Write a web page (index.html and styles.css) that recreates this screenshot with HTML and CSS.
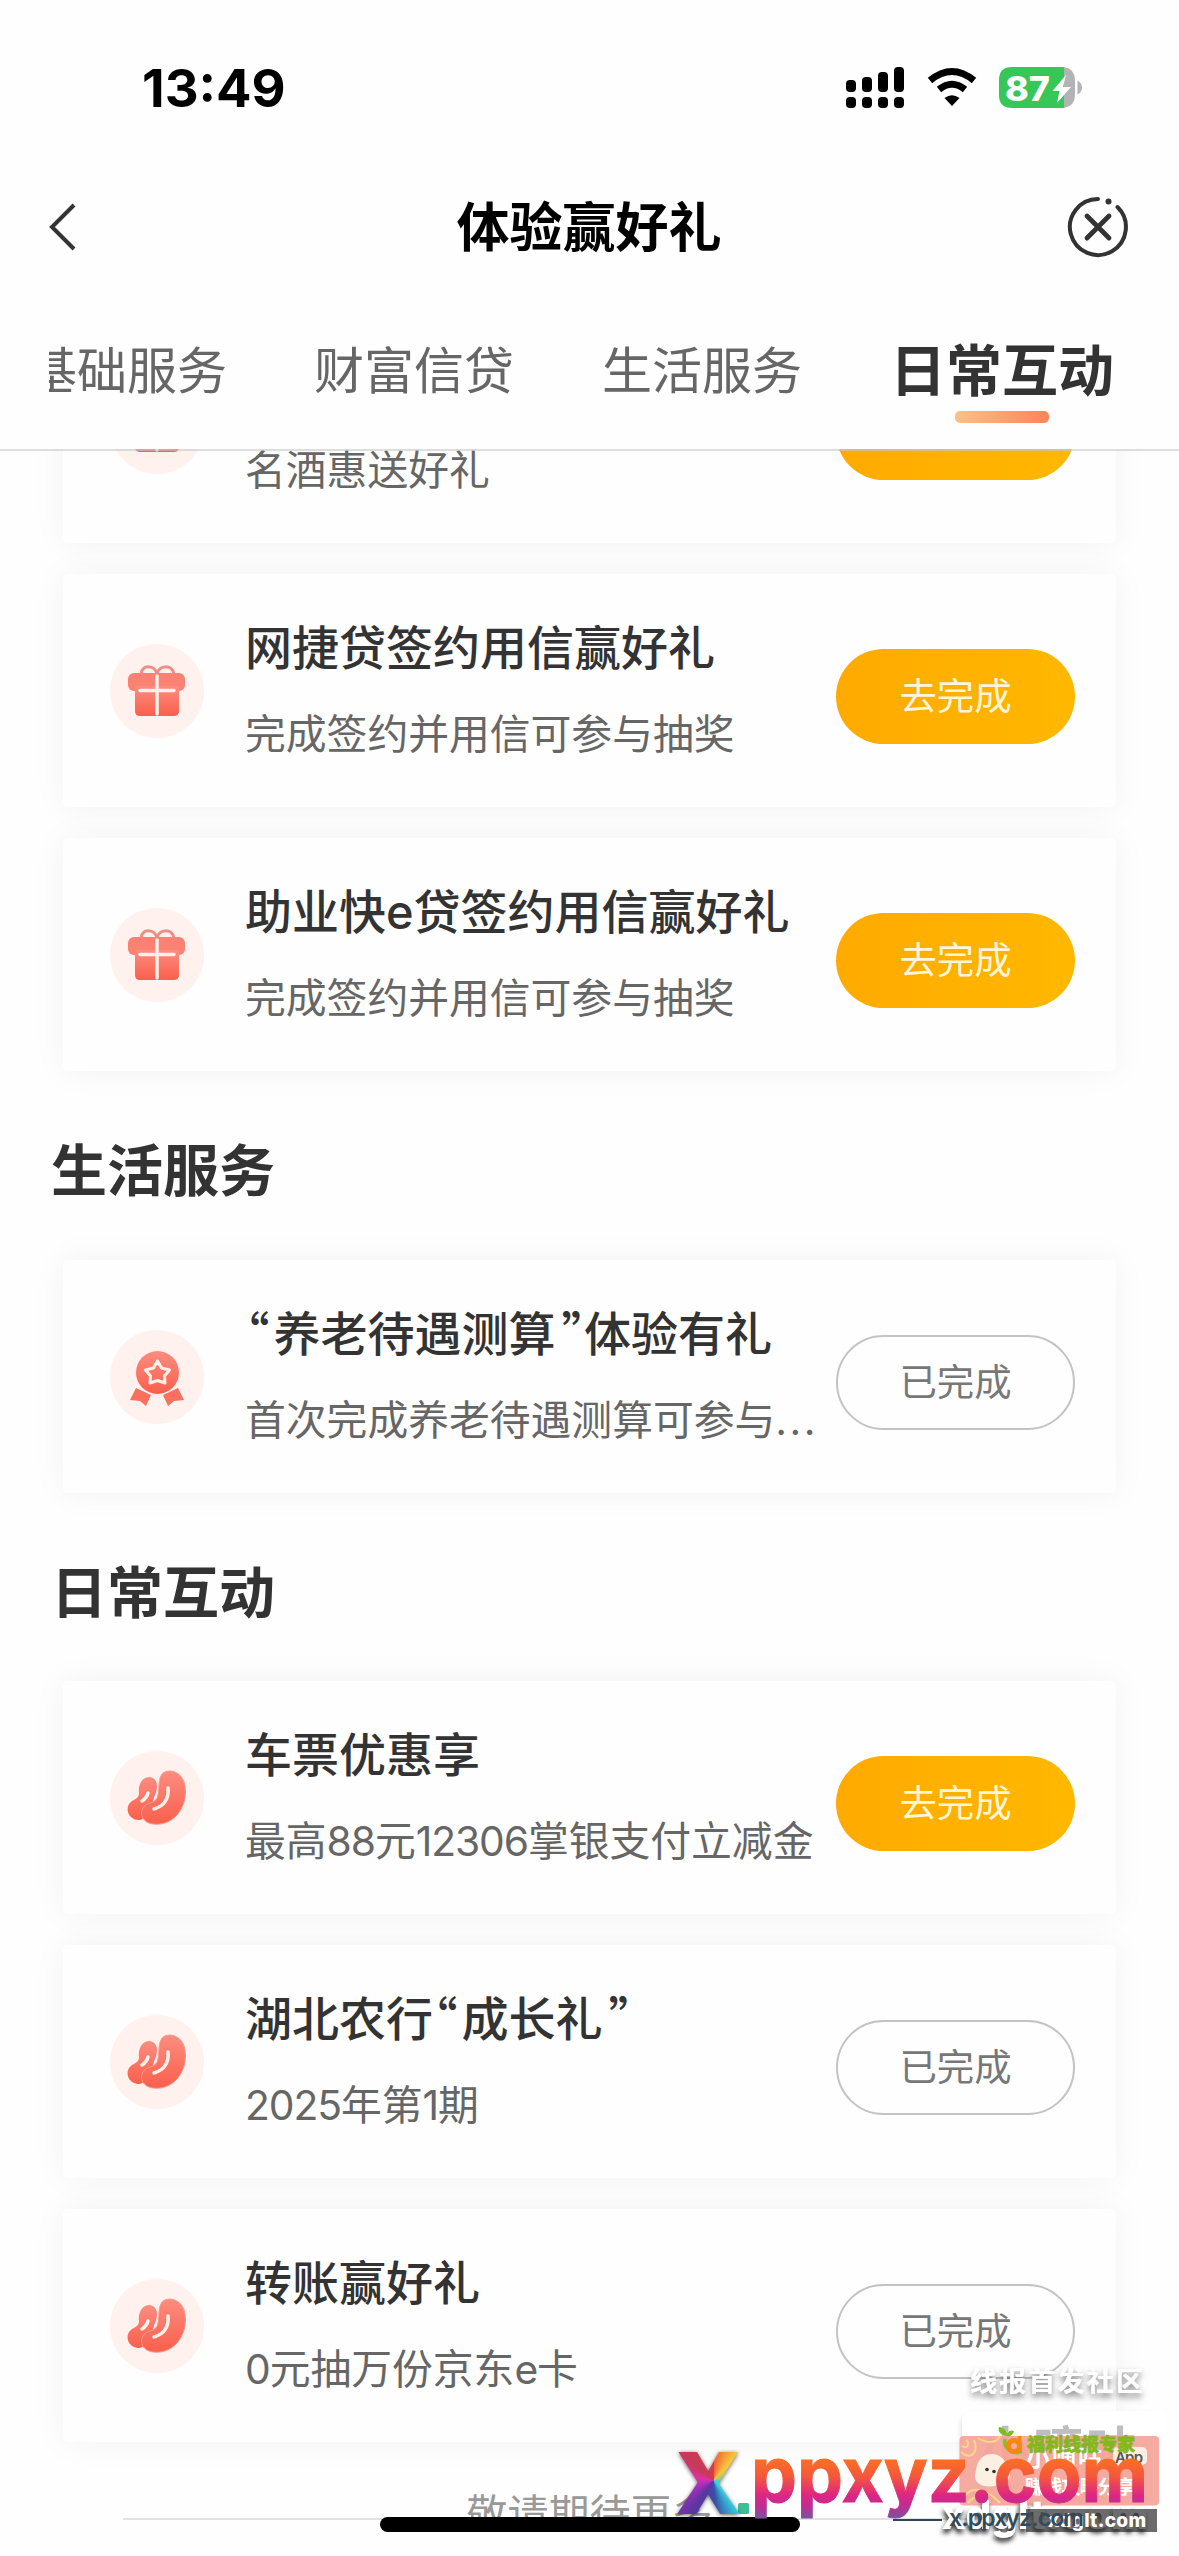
FILE: index.html
```html
<!DOCTYPE html>
<html lang="zh-CN">
<head>
<meta charset="utf-8">
<title>体验赢好礼</title>
<link rel="stylesheet" href="styles.css">
</head>
<body>
<svg class="defs" width="0" height="0" aria-hidden="true">
  <defs>
    <linearGradient id="coral" x1="0" y1="0" x2="0" y2="1">
      <stop offset="0" stop-color="#fb8d80"/><stop offset="1" stop-color="#fb5f4c"/>
    </linearGradient>
    <symbol id="gift" viewBox="0 0 94 94">
      <circle cx="47" cy="47" r="47" fill="#fff1ee"/>
      <path d="M31 30C32 20 45 21 47 30C49 21 62 20 64 30" fill="none" stroke="#f28c80" stroke-width="3"/>
      <rect x="18" y="29" width="57" height="18" rx="6" fill="#fb8173"/>
      <path d="M25 42H69V67Q69 72 64 72H30Q25 72 25 67Z" fill="url(#coral)"/>
      <path d="M47 32V70M30 46.500H64" stroke="#fff1ea" stroke-width="3.500" stroke-linecap="round"/>
    </symbol>
    <symbol id="medal" viewBox="0 0 94 94">
      <circle cx="47" cy="47" r="47" fill="#fff1ee"/>
      <circle cx="47.500" cy="42.500" r="21.500" fill="url(#coral)"/>
      <path d="M47.500 31L51.500 38L59.500 40L54.500 46L55 53L47.500 50.500L40 53L40.500 46L35.500 40L43.500 38Z" fill="none" stroke="#fff1ea" stroke-width="3" stroke-linejoin="round"/>
      <path d="M26 58L41 65L36 76L30 71L20 70ZM68 58L53 65L58 76L64 71L74 70Z" fill="#f9705f"/>
    </symbol>
    <symbol id="bean" viewBox="0 0 94 94">
      <circle cx="47" cy="47" r="47" fill="#fff1ee"/>
      <path d="M40 26C47 27 49 35 45 44C41 55 40 68 29 69C20 69 15 60 19 53C22 48 28 49 29 43C28 33 32 26 40 26Z" fill="url(#coral)"/>
      <path d="M60 20C73 21 77 34 75 47C72 63 60 75 43 73C33 72 29 63 33 57C37 50 46 54 48 44C50 33 47 20 60 20Z" fill="url(#coral)" stroke="#f79a8c" stroke-width="1"/>
      <path d="M58 37C59 48 54 55 44 58M38 42C37 46 35 48 32 50" fill="none" stroke="#fff1ea" stroke-width="3.500" stroke-linecap="round"/>
    </symbol>
  </defs>
</svg>

<header class="header">
  <div class="status">
    <span class="clock">13:49</span>
    <div class="status-icons">
      <svg width="58" height="42" viewBox="0 0 58 42">
        <g><rect y="13" width="10" height="12" rx="4"/><rect x="16" y="10" width="10" height="15" rx="4"/><rect x="32" y="5" width="10" height="20" rx="4"/><rect x="48" width="10" height="25" rx="4"/>
        <rect y="30" width="10" height="11" rx="4"/><rect x="16" y="30" width="10" height="11" rx="4"/><rect x="32" y="30" width="10" height="11" rx="4"/><rect x="48" y="30" width="10" height="11" rx="4"/></g>
      </svg>
      <svg class="wifi" width="50" height="42" viewBox="0 0 50 42">
        <path d="M3 13.500Q25 -4.500 47 13.500M12 22.500Q25 12 38 22.500" fill="none" stroke="#000" stroke-width="7"/>
        <path d="M17.500 31Q25 25.500 32.500 31L25 39Z"/>
      </svg>
      <svg width="83" height="42" viewBox="0 0 83 42">
        <path d="M13 0H65V41H13Q0 41 0 28V13Q0 0 13 0Z" fill="#37c759"/>
        <path d="M65 0Q76 2 76 13V28Q76 39 65 41Z" fill="#b3b3b5"/>
        <path d="M78.500 13.500Q83 16 83 20.500T78.500 27.500Z" fill="#b3b3b5"/>
        <text class="battery-text" x="6" y="33.500" textLength="45" lengthAdjust="spacingAndGlyphs">87</text>
        <path d="M67 8L53.500 24H60.500L58 36L72 20H64Z" fill="#fff"/>
      </svg>
    </div>
  </div>
  <div class="navbar">
    <svg width="30" height="50" viewBox="0 0 30 50"><path d="M27 3L5 25L27 47" fill="none" stroke="#333" stroke-width="4"/></svg>
    <h1 class="title">体验赢好礼</h1>
    <svg width="62" height="62" viewBox="0 0 62 62" fill="none" stroke="#333" stroke-linecap="round">
      <path d="M31 3A28 28 0 1 0 50.500 11" stroke-width="4"/>
      <path d="M20 20L42 42M42 20L20 42" stroke-width="4.800"/>
      <circle cx="41.500" cy="5.500" r="3" fill="#333" stroke="none"/>
    </svg>
  </div>
  <nav class="tabs">
    <span class="tab">基础服务</span>
    <span class="tab">财富信贷</span>
    <span class="tab">生活服务</span>
    <span class="tab active">日常互动</span>
  </nav>
</header>

<main class="content">
  <section class="group first">
    <article class="card">
      <svg class="icon"><use href="#gift"/></svg>
      <div class="info"><h3>名酒惠</h3><p>名酒惠送好礼</p></div>
      <button class="btn go">去完成</button>
    </article>
    <article class="card">
      <svg class="icon"><use href="#gift"/></svg>
      <div class="info"><h3>网捷贷签约用信赢好礼</h3><p>完成签约并用信可参与抽奖</p></div>
      <button class="btn go">去完成</button>
    </article>
    <article class="card">
      <svg class="icon"><use href="#gift"/></svg>
      <div class="info"><h3>助业快e贷签约用信赢好礼</h3><p>完成签约并用信可参与抽奖</p></div>
      <button class="btn go">去完成</button>
    </article>
  </section>
  <h2 class="heading">生活服务</h2>
  <section class="group">
    <article class="card">
      <svg class="icon"><use href="#medal"/></svg>
      <div class="info"><h3><span class="quote open">“</span>养老待遇测算<span class="quote close">”</span>体验有礼</h3><p>首次完成养老待遇测算可参与<span class="dots">...</span></p></div>
      <button class="btn done">已完成</button>
    </article>
  </section>
  <h2 class="heading">日常互动</h2>
  <section class="group daily">
    <article class="card">
      <svg class="icon"><use href="#bean"/></svg>
      <div class="info"><h3>车票优惠享</h3><p>最高<span class="num">88</span>元<span class="num">12306</span>掌银支付立减金</p></div>
      <button class="btn go">去完成</button>
    </article>
    <article class="card">
      <svg class="icon"><use href="#bean"/></svg>
      <div class="info"><h3>湖北农行<span class="quote open">“</span>成长礼<span class="quote close">”</span></h3><p><span class="num">2025</span>年第<span class="num">1</span>期</p></div>
      <button class="btn done">已完成</button>
    </article>
    <article class="card">
      <svg class="icon"><use href="#bean"/></svg>
      <div class="info"><h3>转账赢好礼</h3><p><span class="num">0</span>元抽万份京东<span class="num">e</span>卡</p></div>
      <button class="btn done">已完成</button>
    </article>
  </section>
  <div class="more"><span>敬请期待更多</span></div>
</main>
<div class="home-bar"></div>

<svg class="stamp" width="519" height="216" viewBox="660 2340 519 216">
  <defs>
    <linearGradient id="sunset" gradientUnits="userSpaceOnUse" x1="0" y1="2459" x2="0" y2="2518">
      <stop offset="0" stop-color="#fa7022"/><stop offset=".3" stop-color="#f4573c"/><stop offset=".62" stop-color="#dc2585"/><stop offset=".8" stop-color="#c02d92"/><stop offset="1" stop-color="#7b529f"/>
    </linearGradient>
    <filter id="drop" x="-20%" y="-30%" width="140%" height="180%"><feDropShadow dx="0" dy="4" stdDeviation="3" flood-color="#000" flood-opacity=".5"/></filter>
    <filter id="strong" x="-20%" y="-30%" width="140%" height="180%"><feDropShadow dx="-1" dy="4" stdDeviation="2.500" flood-color="#000" flood-opacity=".85"/></filter>
  </defs>
  <text class="cjk heavy" x="970" y="2391" font-size="27" textLength="173" fill="#fff" filter="url(#drop)">线报首发社区</text>
  <path d="M962 2497V2423Q962 2411 974 2411H1150V2497Z" fill="#fff" filter="url(#drop)" opacity=".35"/>
  <path d="M962 2440V2423Q962 2411 974 2411H1165V2440Z" fill="#fff"/>
  <text class="cjk heavy" x="980" y="2468" font-size="50" textLength="156" fill="#bdbdc2">小嘀咕</text>
  <rect x="959.500" y="2436" width="199.500" height="69.500" rx="4" fill="#f5a499" fill-opacity=".92"/>
  <path d="M961 2452C972 2462 979 2450 974 2440M962 2446C968 2450 970 2443 966 2440M962 2500C970 2484 986 2488 1000 2503M968 2503C974 2494 984 2496 990 2503M978 2438C986 2443 996 2444 1000 2436" fill="none" stroke="#f9d884" stroke-width="2"/>
  <path d="M976 2470C977 2461 983 2453 993 2454C1004 2455 1009 2466 1010 2476C1008 2487 983 2490 977 2482C974 2479 975 2474 976 2470Z" fill="#fbf0e2"/>
  <circle cx="987" cy="2469.500" r="1.800" fill="#333"/><circle cx="994" cy="2471.500" r="1.800" fill="#333"/>
  <text class="cjk heavy" x="1026" y="2466" font-size="24" textLength="76" fill="#fff">小嘀咕</text>
  <rect x="1113" y="2447" width="34" height="18" rx="5" fill="#faeee2"/>
  <text class="latin" x="1115" y="2463" font-size="15" font-weight="600" textLength="28" fill="#555">App</text>
  <text class="cjk heavy" x="1025" y="2494" font-size="19" textLength="110" fill="#fff">赚钱攻略分享</text>
  <path d="M1004 2435C999 2434 998 2430 999 2427C1003 2427 1006 2430 1007 2434C1009 2430 1012 2430 1014 2431C1013 2435 1010 2437 1007 2436" fill="#7fbd18"/>
  <path d="M1005 2439A11.500 11.500 0 0 0 1022 2451" fill="none" stroke="#83c21c" stroke-width="3.500"/>
  <circle cx="1014" cy="2446" r="5.500" fill="none" stroke="#f68712" stroke-width="5"/><path d="M1019.500 2436V2452" stroke="#f68712" stroke-width="4"/>
  <text class="cjk heavy green" x="1027" y="2451" font-size="18" textLength="108">福利线报专家</text>
  <text class="latin" x="942" y="2529" font-size="40" font-weight="800" textLength="206" fill="#fff" filter="url(#strong)">xdglt.com</text>
  <rect x="1026" y="2509" width="131" height="23" fill="#333" fill-opacity=".72"/>
  <text class="latin" x="1048" y="2527" font-size="19" font-weight="800" textLength="98" fill="#fff">xdglt.com</text>
  <path d="M893 2520H942" stroke="#2d4658" stroke-width="1.800"/>
  <text class="latin" x="949" y="2526" font-size="23" font-weight="600" textLength="135" fill="#304b5d">x.ppxyz.com</text>
  <text class="latin" x="751" y="2502" font-size="77" font-weight="700" textLength="397" lengthAdjust="spacingAndGlyphs" fill="url(#sunset)" stroke="url(#sunset)" stroke-width="1">ppxyz.com</text>
  <rect x="738" y="2503" width="11" height="11" rx="1.500" fill="#3bbf93"/>
</svg>
<span class="rainbow">X</span>
</body>
</html>
```
FILE: styles.css
```css
* { box-sizing: border-box; }

body {
  margin: 0;
  position: relative;
  width: 1179px;
  height: 2556px;
  overflow: hidden;
  background: #fefefe;
  color: #333;
  font-family: Inter, "Noto Sans CJK SC", sans-serif;
}

.defs { position: absolute; }

h1, h2, h3, p { margin: 0; }

.header {
  position: relative;
  z-index: 1;
  height: 449px;
  background: #fefefe;
}

.status {
  display: flex;
  justify-content: space-between;
  align-items: center;
  height: 176px;
  padding: 0 97px 0 142px;
}

.clock {
  font-size: 52.5px;
  font-weight: 750;
  line-height: 60px;
  color: #000;
}

.status-icons { display: flex; gap: 22.5px; }
.battery-text { font: 800 34px Inter, sans-serif; fill: #fff; }

.navbar {
  display: grid;
  grid-template-columns: 1fr auto 1fr;
  align-items: center;
  height: 102px;
  padding: 0 50px 0 47px;
}

.navbar > :last-child { justify-self: end; }

.title {
  padding: 2px 0 0 2px;
  font-size: 53px;
  font-weight: 700;
  line-height: 70px;
  color: #000;
}

.tabs {
  display: flex;
  justify-content: flex-end;
  align-items: center;
  gap: 88px;
  height: 159px;
  margin: 12px 61px 0 49px;
  padding: 2px 4px 0 0;
  overflow: hidden;
  white-space: nowrap;
}

.tab {
  position: relative;
  flex: none;
  font-size: 50px;
  line-height: 110px;
  color: #666;
}

.tab:first-child { margin-right: -1px; }

.tab.active {
  font-size: 56px;
  font-weight: 700;
  color: #333;
}

.tab.active::after {
  content: "";
  position: absolute;
  left: 65px;
  bottom: 3px;
  width: 94px;
  height: 12px;
  border-radius: 5px;
  background: linear-gradient(90deg, #fcc184, #fd8457);
}

.content {
  position: relative;
  height: 2107px;
  overflow: hidden;
}

.content::before {
  content: "";
  position: absolute;
  top: 0;
  left: 0;
  width: 100%;
  height: 2px;
  background: rgba(200, 200, 200, .6);
}

.group {
  display: flex;
  flex-direction: column;
  gap: 31px;
  padding: 0 63px;
}

.group.first { margin-top: -139px; }
.group.daily { margin-top: -1px; }

.card {
  display: flex;
  align-items: flex-start;
  height: 233px;
  padding: 0 41px 0 47px;
  border-radius: 5px;
  background: #fefefe;
  box-shadow: 0 0 34px rgba(0, 0, 0, .05);
}

.icon {
  width: 94px;
  height: 94px;
  margin-top: 69.5px;
}

.info {
  flex: 1;
  min-width: 0;
  display: flex;
  flex-direction: column;
  gap: 30px;
  padding: 45px 0 0 41px;
  white-space: nowrap;
}

.info h3 { font-size: 47px; font-weight: 500; line-height: 57px; }
.info p { font-size: 40.8px; line-height: 57px; color: #666; }

.quote {
  font-family: "Noto Sans CJK SC", sans-serif;
  font-feature-settings: "halt";
  line-height: 1px;
}

.quote.open { margin: 0 4px 0 1px; }
.quote.close { margin: 0 -1px 0 6px; }

.num { letter-spacing: -1.1px; }
.dots { letter-spacing: 2.4px; }

.btn {
  width: 239px;
  height: 95px;
  margin-top: 75px;
  padding: 0 0 5px;
  border: 0;
  border-radius: 48px;
  font: 37.4px Inter, "Noto Sans CJK SC", sans-serif;
}

.btn.go { background: linear-gradient(90deg, #ffaa00, #ffb800); color: #fff6d8; }
.btn.done { background: #fefefe; border: 2px solid #c3c3c3; color: #777; }

.heading {
  display: flex;
  align-items: center;
  height: 189px;
  padding: 2px 0 0 51px;
  font-size: 56px;
  font-weight: 700;
}

.more {
  display: flex;
  align-items: center;
  justify-content: center;
  gap: 40px;
  height: 60px;
  margin: 39px 123px 0;
  font-size: 41px;
  color: #999;
}

.more::before, .more::after {
  content: "";
  flex: 1;
  height: 2px;
  margin-top: 16px;
  background: #e2e2e2;
}

.home-bar {
  position: absolute;
  left: 380px;
  top: 2517px;
  width: 420px;
  height: 15px;
  border-radius: 8px;
  background: #000;
  box-shadow: 0 15px 0 #fefefe;
}

.stamp { position: absolute; left: 660px; top: 2340px; }
.cjk { font-family: "Noto Sans CJK SC", sans-serif; }
.heavy { font-weight: 700; }
.green { fill: #82b81b; stroke: #82b81b; stroke-width: .8px; }
.latin { font-family: Inter, sans-serif; }

.rainbow {
  position: absolute;
  left: 677px;
  top: 2437px;
  font: 800 87px/87px "Open Sans", sans-serif;
  color: transparent;
  background: conic-gradient(from 0deg at 58% 50%, #ee5a36, #f7c43a 40deg, #f2c53a 45deg, #3bd5c6 100deg, #35cfe0 140deg, #3a4fa8 175deg, #5a35a0 215deg, #b52fc0 255deg, #e02fa0 280deg, #c63a58 310deg, #d93c48);
  background-clip: text;
  -webkit-background-clip: text;
  filter: drop-shadow(0 1px 2px rgba(0, 0, 0, .6));
}
```
